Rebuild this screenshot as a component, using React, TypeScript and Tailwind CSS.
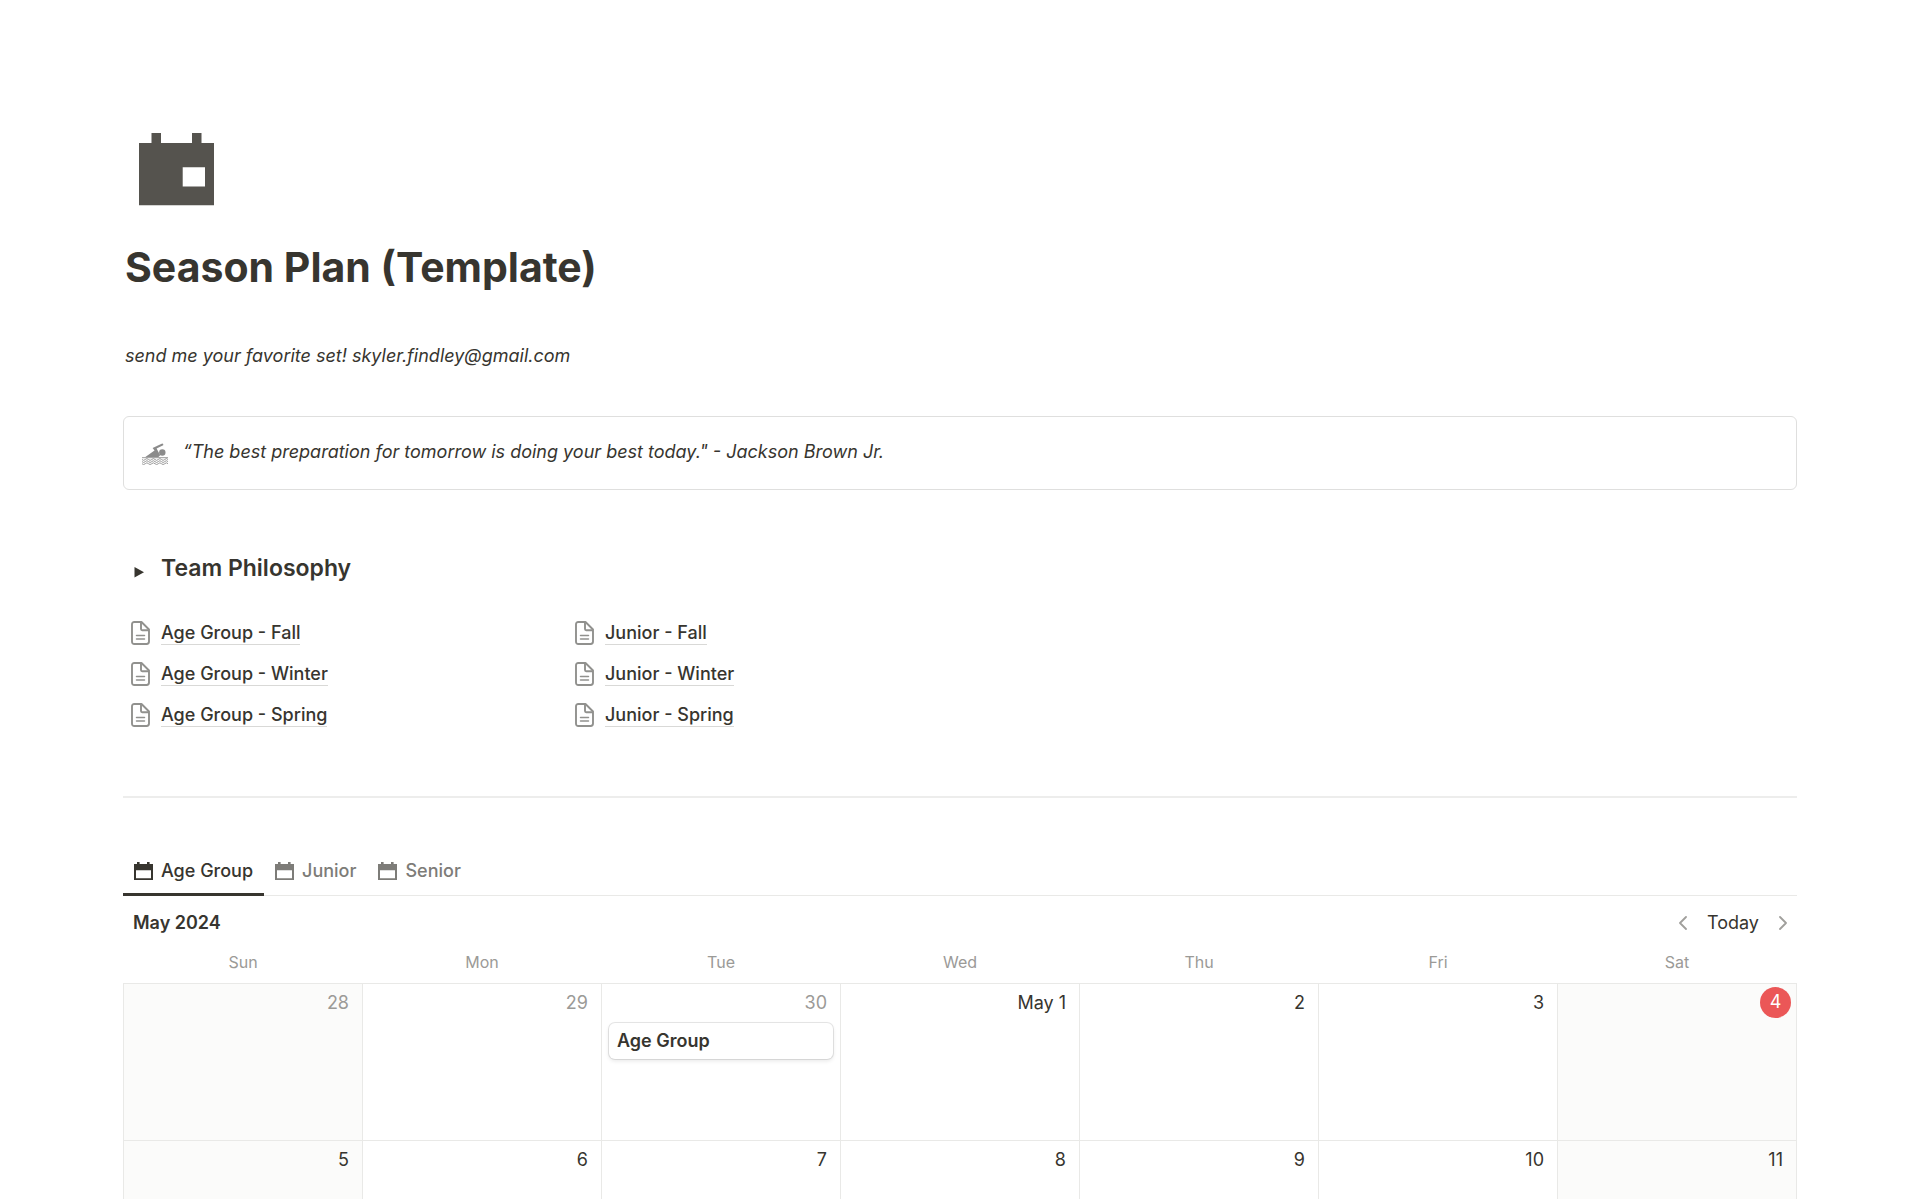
import clsx from "clsx"

interface IDay {
    label: string,
    muted?: boolean,
    today?: boolean,
    event?: string
}

const weekdays = ["Sun", "Mon", "Tue", "Wed", "Thu", "Fri", "Sat"]

const weeks: IDay[][] = [
    [
        { label: "28", muted: true },
        { label: "29", muted: true },
        { label: "30", muted: true, event: "Age Group" },
        { label: "May 1" },
        { label: "2" },
        { label: "3" },
        { label: "4", today: true },
    ],
    [
        { label: "5" },
        { label: "6" },
        { label: "7" },
        { label: "8" },
        { label: "9" },
        { label: "10" },
        { label: "11" },
    ],
]

const pageColumns = [
    ["Age Group - Fall", "Age Group - Winter", "Age Group - Spring"],
    ["Junior - Fall", "Junior - Winter", "Junior - Spring"],
]

const tabs = ["Age Group", "Junior", "Senior"]

function PageIcon() {
    return (
        <svg viewBox="0 0 75 73" className="ml-4 h-[73px] w-[75px]" fill="#55534e">
            <path fillRule="evenodd" d="M12.500 0h9.500v10h31V0h9.500v10H75v62.300H0V10h12.500zM43.700 34.300v19.200H66V34.300z" />
        </svg>
    )
}

function SwimmerIcon() {
    return (
        <svg viewBox="0 0 26 22" className="h-[22px] w-[26px]" fill="none">
            <path d="M3 14.200 12.500 7.500 10.600 5 20.200 0.400Q21.800 0.600 21.200 2.200L14.600 5.400 18.200 12.300 16.200 14.200z" fill="#8b8b8b" />
            <circle cx="20.300" cy="9.500" r="3.200" fill="#8b8b8b" />
            <g stroke="#999" strokeWidth="1">
                <path d="M0 14.700h26" />
                <path d="M0 16.500q1.600 1.800 3.250 0t3.250 0 3.250 0 3.250 0 3.250 0 3.250 0 3.250 0 3.250 0" />
                <path d="M0 18.600q1.600 1.800 3.250 0t3.250 0 3.250 0 3.250 0 3.250 0 3.250 0 3.250 0 3.250 0" />
                <path d="M0 20.700q1.600 1.800 3.250 0t3.250 0 3.250 0 3.250 0 3.250 0 3.250 0 3.250 0 3.250 0" />
            </g>
        </svg>
    )
}

function DocumentIcon() {
    return (
        <svg viewBox="0 0 19 24" className="h-6 w-[19px] shrink-0" fill="none" stroke="#91918e" strokeWidth="1.900" strokeLinejoin="round">
            <path d="M3.400 1H10.500L18 8.500V20.600Q18 23 15.600 23H3.400Q1 23 1 20.600V3.400Q1 1 3.400 1z" />
            <path d="M10 1V8Q10 9.200 11.200 9.200H18" />
            <path d="M5.500 14.500h8M5.500 18h8" strokeWidth="1.500" strokeLinecap="round" />
        </svg>
    )
}

function CalendarIcon() {
    return (
        <svg viewBox="0 0 19 18" className="h-[18px] w-[19px]" fill="currentColor">
            <path fillRule="evenodd" d="M3 0H5.600V2H13V0H15.600V2H19V18H0V2H3zM2 8.200V16.200H17V8.200z" />
        </svg>
    )
}

function Chevron({ d }: { d: string }) {
    return (
        <svg viewBox="0 0 8 14" className="h-[14px] w-2" fill="none" stroke="#a09f9c" strokeWidth="1.800" strokeLinecap="round" strokeLinejoin="round">
            <path d={d} />
        </svg>
    )
}

function DayCell({ day, weekend }: { day: IDay, weekend: boolean }) {
    return (
        <td className={clsx("h-[157px] border border-[#e9e9e7] p-0 align-top", weekend && "bg-[#fbfbfa]")}>
            <div className="flex h-[39px] justify-end pt-[3px]">
                {day.today
                    ? <span className="mr-[5px] flex h-[31px] w-[31px] items-center justify-center rounded-full bg-[#eb5757] text-white">{day.label}</span>
                    : <span className={clsx("mr-[13px] leading-[31px]", day.muted && "text-[#9b9a97]")}>{day.label}</span>}
            </div>
            {day.event &&
                <a href="#" className="mx-[7px] block h-9 rounded-md bg-white px-2 leading-[35px] font-semibold shadow-[0_0_0_1px_rgba(15,15,15,0.1),0_2px_4px_rgba(15,15,15,0.1)]">{day.event}</a>}
        </td>
    )
}

function App() {
    return (
        <div className="h-screen overflow-hidden bg-white px-[123px] pt-[133px] font-['Inter',sans-serif] text-lg text-[#37352f]">
            <header>
                <PageIcon />
                <h1 className="mt-9 pl-0.5 text-[41px] leading-[50px] font-bold">Season Plan (Template)</h1>
            </header>

            <p className="mt-[50px] pl-0.5 leading-7 italic">send me your favorite set! skyler.findley@gmail.com</p>

            <aside className="mt-[46px] flex h-[74px] items-center rounded-md border border-[#dfdfde] px-[18px] pt-0.5">
                <SwimmerIcon />
                <p className="pb-1 pl-[15px] leading-7 italic">“The best preparation for tomorrow is doing your best today." - Jackson Brown Jr.</p>
            </aside>

            <details className="mt-[60px]">
                <summary className="flex list-none items-center">
                    <svg viewBox="0 0 10 11" className="mt-2 ml-[11px] h-[11px] w-[10px]" fill="#37352f">
                        <path d="M0.500 0 10 5.300 0.500 10.600z" />
                    </svg>
                    <h2 className="pl-[17px] text-[23px] leading-9 font-semibold">Team Philosophy</h2>
                </summary>
            </details>

            <nav className="mt-[26px] grid grid-cols-[444px_1fr]">
                {pageColumns.map((pages) => (
                    <ul key={pages[0]}>
                        {pages.map((page) => (
                            <li key={page} className="flex h-[41px] items-center pl-2">
                                <DocumentIcon />
                                <a href="#" className="ml-[11px] border-b border-[#d9d9d7] leading-[23px] font-medium">{page}</a>
                            </li>
                        ))}
                    </ul>
                ))}
            </nav>

            <hr className="mt-[61px] border-t-2 border-[#ededec]" />

            <section>
                <div role="tablist" className="mt-[47px] flex h-[51px] border-b border-[#e9e9e7]">
                    {tabs.map((tab, index) => (
                        <button
                            key={tab}
                            type="button"
                            role="tab"
                            aria-selected={index === 0}
                            className={clsx(
                                "-mb-px flex items-center gap-2 border-b-3 px-[11px] pt-[3px] font-medium",
                                index === 0 ? "border-[#37352f]" : "border-transparent text-[#7d7c78]"
                            )}>
                            <CalendarIcon />
                            {tab}
                        </button>
                    ))}
                </div>

                <div className="flex h-[54px] items-center justify-between px-2.5">
                    <h3 className="font-semibold">May 2024</h3>
                    <div className="flex items-center gap-5">
                        <button type="button" aria-label="Previous month"><Chevron d="M7 1 1 7l6 6" /></button>
                        <button type="button">Today</button>
                        <button type="button" aria-label="Next month"><Chevron d="m1 1 6 6-6 6" /></button>
                    </div>
                </div>

                <table className="w-full table-fixed border-collapse">
                    <thead>
                        <tr>
                            {weekdays.map((weekday) => (
                                <th key={weekday} className="h-[33px] p-0 pb-2 text-base leading-5 font-normal text-[#9b9a97]">{weekday}</th>
                            ))}
                        </tr>
                    </thead>
                    <tbody>
                        {weeks.map((week) => (
                            <tr key={week[0].label}>
                                {week.map((day, index) => (
                                    <DayCell key={day.label} day={day} weekend={index === 0 || index === 6} />
                                ))}
                            </tr>
                        ))}
                    </tbody>
                </table>
            </section>
        </div>
    )
}

export default App
